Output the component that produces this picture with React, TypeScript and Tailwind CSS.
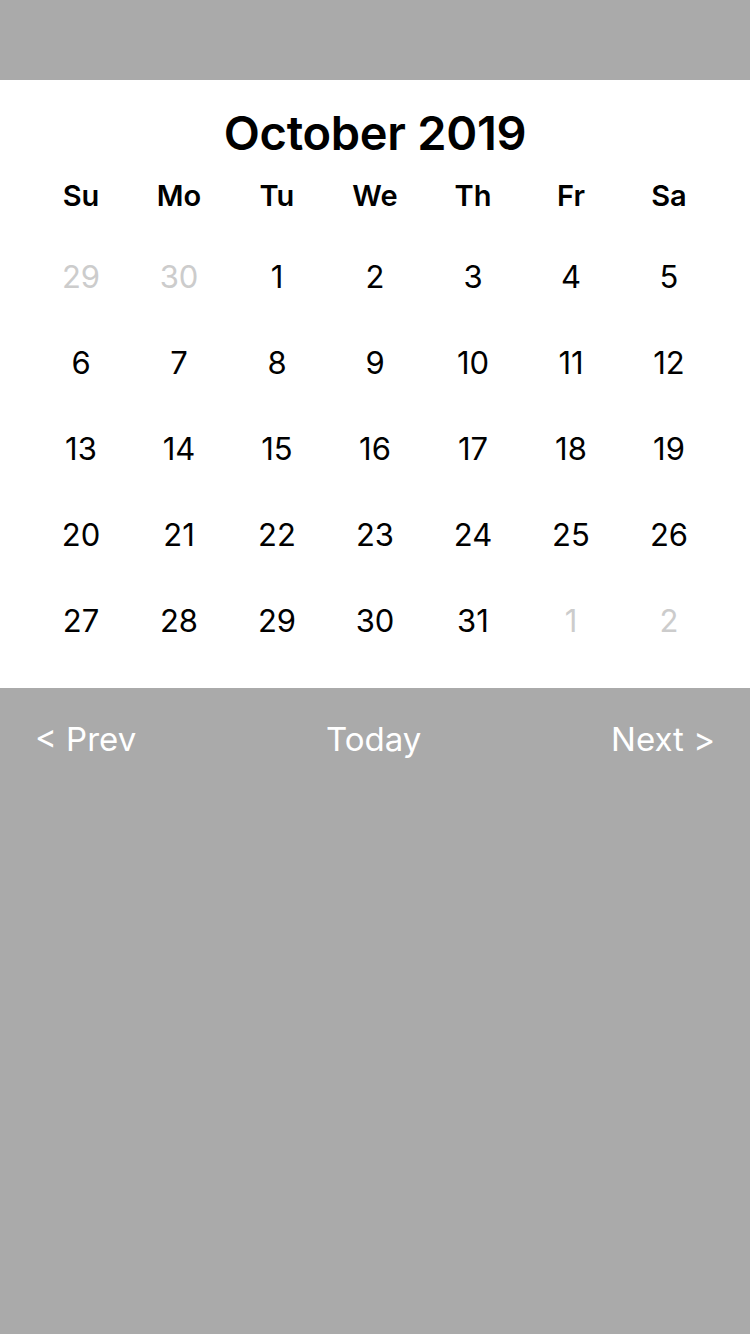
import React from "react";

const DAYS = ["Su", "Mo", "Tu", "We", "Th", "Fr", "Sa"];

// semanas de octubre 2019, con los días de otros meses marcados
const WEEKS: { n: number; out?: boolean }[][] = [
  [{ n: 29, out: true }, { n: 30, out: true }, { n: 1 }, { n: 2 }, { n: 3 }, { n: 4 }, { n: 5 }],
  [{ n: 6 }, { n: 7 }, { n: 8 }, { n: 9 }, { n: 10 }, { n: 11 }, { n: 12 }],
  [{ n: 13 }, { n: 14 }, { n: 15 }, { n: 16 }, { n: 17 }, { n: 18 }, { n: 19 }],
  [{ n: 20 }, { n: 21 }, { n: 22 }, { n: 23 }, { n: 24 }, { n: 25 }, { n: 26 }],
  [{ n: 27 }, { n: 28 }, { n: 29 }, { n: 30 }, { n: 31 }, { n: 1, out: true }, { n: 2, out: true }],
];

export default function App() {
  return (
    <div className="min-h-[1334px] bg-[#aaaaaa] font-['Inter','Liberation_Sans',sans-serif]">
      <div className="h-[80px]" />

      <div className="bg-white pt-[18px] pb-[24px]">
        <h1 className="text-center text-[47px] leading-[70px] font-semibold text-black tracking-[-0.3px]">
          October 2019
        </h1>

        <div className="grid grid-cols-7 px-[32px] h-[56px] items-center">
          {DAYS.map((d) => (
            <div key={d} className="text-center text-[29px] font-semibold text-black">
              {d}
            </div>
          ))}
        </div>

        <div className="mt-[10px] px-[32px]">
          {WEEKS.map((week, i) => (
            <div key={i} className="grid grid-cols-7 h-[86px] items-center">
              {week.map((day, j) => (
                <div
                  key={j}
                  className={
                    day.out
                      ? "text-center text-[31px] text-[#cccccc]"
                      : "text-center text-[31px] text-black"
                  }
                >
                  {day.n}
                </div>
              ))}
            </div>
          ))}
        </div>
      </div>

      <div className="flex h-[104px] items-center justify-between px-[35px] text-[33px] text-white">
        <button>&lt; Prev</button>
        <button>Today</button>
        <button>Next &gt;</button>
      </div>
    </div>
  );
}
